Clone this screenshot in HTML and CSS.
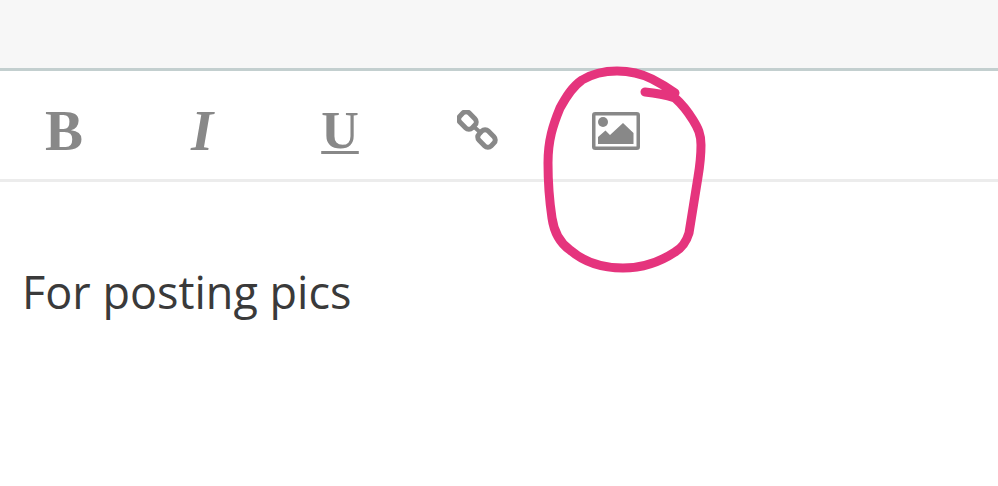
FILE: index.html
```html
<!DOCTYPE html>
<html lang="en">
<head>
<meta charset="utf-8">
<title>For posting pics</title>
<link rel="stylesheet" href="styles.css">
</head>
<body>
<div class="page">
  <div class="topbar"></div>
  <div class="toolbar">
    <span class="tool bold">B</span>
    <span class="tool italic">I</span>
    <span class="tool underline">U</span>
    <span class="tool">
      <svg class="icon" width="42" height="42" viewBox="0 0 42 42" fill="none" stroke="#888" stroke-width="5">
        <rect x="2" y="4" width="17" height="13" rx="4.500" transform="rotate(45 10.500 10.500)"/>
        <rect x="21" y="22" width="17" height="13" rx="4.500" transform="rotate(45 29.500 28.500)"/>
        <path d="M16 16L24 23" stroke-width="4"/>
      </svg>
    </span>
    <span class="tool">
      <svg class="icon" width="48" height="38" viewBox="0 0 48 38">
        <rect x="1.750" y="1.750" width="44.500" height="34.500" rx="1.500" fill="none" stroke="#888" stroke-width="3.500"/>
        <circle cx="11" cy="10" r="5" fill="#888"/>
        <path d="M6 32V25L13.500 18.500 18 23 31 11 41.500 21V32Z" fill="#888"/>
      </svg>
    </span>
  </div>
  <div class="editor">For posting pics</div>
  <svg class="scribble" width="998" height="486" viewBox="0 0 998 486" fill="none" stroke="#e5347d" stroke-width="9" stroke-linecap="round" stroke-linejoin="round">
    <path d="M645 92C656 93 666 95 675 98C683 105 688 112 693 120C698 128 701 134 701 145C701 155 700 165 698 177C695 195 692 215 689 233C686 243 682 248 675 252C660 262 642 268 623 268C605 268 585 263 570 250C560 243 554 232 552 218C549 198 548 180 548 163C548 140 553 125 560 108C566 97 572 87 582 80C592 74 603 71 617 71C630 71 642 74 652 79C660 83 668 88 675 93"/>
  </svg>
</div>
</body>
</html>
```
FILE: styles.css
```css
* {
  box-sizing: border-box;
}

html,
body {
  margin: 0;
  background: #fff;
}

.page {
  position: relative;
  width: 998px;
  height: 486px;
  overflow: hidden;
}

.topbar {
  height: 71px;
  background: #f7f7f7;
  border-bottom: 3px solid #c3cfcf;
}

.toolbar {
  display: flex;
  align-items: center;
  gap: 92px;
  height: 111px;
  padding: 12px 0 0 41px;
  border-bottom: 3px solid #ececec;
}

.tool {
  display: flex;
  flex: 0 0 46px;
  justify-content: center;
  width: 46px;
  font-family: "Liberation Serif", serif;
  font-size: 57px;
  line-height: 50px;
  color: #888;
}

.bold {
  font-weight: 700;
}

.italic {
  font-weight: 700;
  font-style: italic;
}

.underline {
  font-size: 52px;
  font-weight: 700;
  text-decoration: underline;
  text-decoration-thickness: 3px;
  text-underline-offset: 3px;
}

.icon {
  display: block;
  flex: none;
}

.editor {
  padding: 82px 0 0 22px;
  font-family: "Open Sans", sans-serif;
  font-size: 45px;
  line-height: 56px;
  color: #3a3a3a;
}

.scribble {
  position: absolute;
  top: 0;
  left: 0;
}
```
